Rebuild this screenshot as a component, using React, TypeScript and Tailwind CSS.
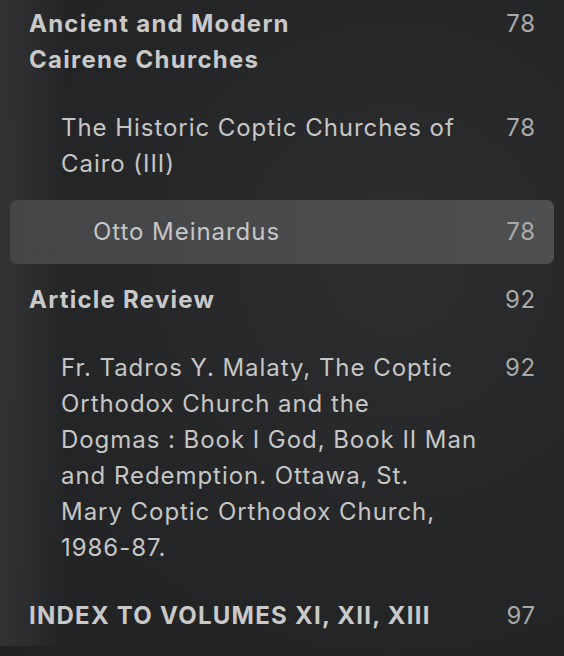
type Entry = {
  lines: string[];
  page: string;
  level: 0 | 1 | 2;
  active?: boolean;
};

const entries: Entry[] = [
  { lines: ["Ancient and Modern", "Cairene Churches"], page: "78", level: 0 },
  { lines: ["The Historic Coptic Churches of", "Cairo (III)"], page: "78", level: 1 },
  { lines: ["Otto Meinardus"], page: "78", level: 2, active: true },
  { lines: ["Article Review"], page: "92", level: 0 },
  {
    lines: [
      "Fr. Tadros Y. Malaty, The Coptic",
      "Orthodox Church and the",
      "Dogmas : Book I God, Book II Man",
      "and Redemption. Ottawa, St.",
      "Mary Coptic Orthodox Church,",
      "1986-87.",
    ],
    page: "92",
    level: 1,
  },
  { lines: ["INDEX TO VOLUMES XI, XII, XIII"], page: "97", level: 0 },
];

const indent = ["pl-[19px]", "pl-[51px]", "pl-[83px]"];

function Row({ lines, page, level, active }: Entry) {
  return (
    <div
      className={`mx-[10px] my-[2px] py-[14px] pr-[18px] flex justify-between items-start rounded-[7px] ${indent[level]} ${
        active ? "bg-gradient-to-r from-[#444547] to-[#4e4f51]" : ""
      }`}
    >
      <div className={level === 0 ? "font-bold text-[#c9c9c9] tracking-[1.25px]" : "text-[#c6c6c6] tracking-[0.95px]"}>
        {lines.map((l) => (
          <div key={l} className="whitespace-nowrap">
            {l}
          </div>
        ))}
      </div>
      <div className="text-[#a9a9a9] tracking-[0.8px]">{page}</div>
    </div>
  );
}

export default function App() {
  return (
    <div
      className="w-[564px] h-[656px] overflow-hidden bg-[radial-gradient(ellipse_at_70%_40%,#2c2d2f_0%,#242527_60%,#212224_100%)] text-[24px] leading-[36px]"
      style={{ fontFamily: "Inter, 'Noto Sans', sans-serif" }}
    >
      <div className="h-full bg-gradient-to-r from-[#3a3a3b]/70 via-transparent via-[12%] to-transparent">
        <div className="-mt-[10px] flex flex-col">
          {entries.map((e) => (
            <Row key={e.lines[0]} {...e} />
          ))}
        </div>
      </div>
    </div>
  );
}
